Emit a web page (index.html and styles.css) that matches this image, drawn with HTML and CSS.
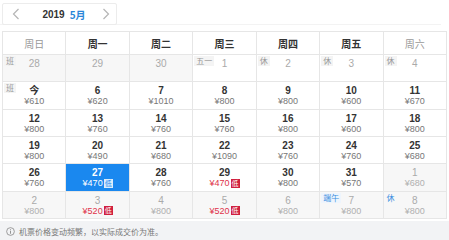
FILE: index.html
```html
<!DOCTYPE html>
<html lang="zh">
<head>
<meta charset="utf-8">
<link rel="stylesheet" href="styles.css">
</head>
<body>
<div class="cal">
  <div class="top">
    <div class="nav">
      <svg class="arr" width="8" height="12" viewBox="0 0 8 12"><path d="M6.5 1 L1.5 6 L6.5 11" fill="none" stroke="#b5b5b5" stroke-width="1.2"/></svg>
      <div class="ym"><span class="yr">2019</span><span class="mo">5月</span></div>
      <svg class="arr" width="8" height="12" viewBox="0 0 8 12"><path d="M1.5 1 L6.5 6 L1.5 11" fill="none" stroke="#b5b5b5" stroke-width="1.2"/></svg>
    </div>
  </div>
  <div class="grid">
    <div class="wh we">周日</div><div class="wh">周一</div><div class="wh">周二</div><div class="wh">周三</div><div class="wh">周四</div><div class="wh">周五</div><div class="wh we">周六</div>

    <div class="c out"><span class="tag">班</span><span class="n">28</span></div>
    <div class="c out"><span class="n">29</span></div>
    <div class="c out"><span class="n">30</span></div>
    <div class="c past"><span class="tag">五一</span><span class="n">1</span></div>
    <div class="c past"><span class="tag">休</span><span class="n">2</span></div>
    <div class="c past"><span class="tag">休</span><span class="n">3</span></div>
    <div class="c past"><span class="tag">休</span><span class="n">4</span></div>

    <div class="c"><span class="tag">班</span><span class="n">今</span><span class="p">¥610</span></div>
    <div class="c"><span class="n">6</span><span class="p">¥620</span></div>
    <div class="c"><span class="n">7</span><span class="p">¥1010</span></div>
    <div class="c"><span class="n">8</span><span class="p">¥800</span></div>
    <div class="c"><span class="n">9</span><span class="p">¥800</span></div>
    <div class="c"><span class="n">10</span><span class="p">¥600</span></div>
    <div class="c"><span class="n">11</span><span class="p">¥670</span></div>

    <div class="c"><span class="n">12</span><span class="p">¥800</span></div>
    <div class="c"><span class="n">13</span><span class="p">¥760</span></div>
    <div class="c"><span class="n">14</span><span class="p">¥760</span></div>
    <div class="c"><span class="n">15</span><span class="p">¥760</span></div>
    <div class="c"><span class="n">16</span><span class="p">¥800</span></div>
    <div class="c"><span class="n">17</span><span class="p">¥600</span></div>
    <div class="c"><span class="n">18</span><span class="p">¥800</span></div>

    <div class="c"><span class="n">19</span><span class="p">¥800</span></div>
    <div class="c"><span class="n">20</span><span class="p">¥490</span></div>
    <div class="c"><span class="n">21</span><span class="p">¥680</span></div>
    <div class="c"><span class="n">22</span><span class="p">¥1090</span></div>
    <div class="c"><span class="n">23</span><span class="p">¥760</span></div>
    <div class="c"><span class="n">24</span><span class="p">¥760</span></div>
    <div class="c"><span class="n">25</span><span class="p">¥680</span></div>

    <div class="c"><span class="n">26</span><span class="p">¥760</span></div>
    <div class="c sel"><span class="n">27</span><span class="p low">¥470<i class="lo">低</i></span></div>
    <div class="c"><span class="n">28</span><span class="p">¥760</span></div>
    <div class="c"><span class="n">29</span><span class="p low">¥470<i class="lo">低</i></span></div>
    <div class="c"><span class="n">30</span><span class="p">¥800</span></div>
    <div class="c"><span class="n">31</span><span class="p">¥570</span></div>
    <div class="c out"><span class="n">1</span><span class="p">¥680</span></div>

    <div class="c out"><span class="n">2</span><span class="p">¥800</span></div>
    <div class="c out"><span class="n">3</span><span class="p low">¥520<i class="lo">低</i></span></div>
    <div class="c out"><span class="n">4</span><span class="p">¥800</span></div>
    <div class="c out"><span class="n">5</span><span class="p low">¥520<i class="lo">低</i></span></div>
    <div class="c out"><span class="n">6</span><span class="p">¥800</span></div>
    <div class="c out"><span class="tag blue">端午</span><span class="n">7</span><span class="p">¥800</span></div>
    <div class="c out"><span class="tag blue plain">休</span><span class="n">8</span><span class="p">¥800</span></div>
  </div>
  <div class="tip">
    <svg width="9" height="9" viewBox="0 0 10 10"><circle cx="5" cy="5" r="4.3" fill="none" stroke="#8a8a8a" stroke-width="0.9"/><rect x="4.5" y="4.2" width="1" height="3.3" fill="#8a8a8a"/><rect x="4.5" y="2.5" width="1" height="1" fill="#8a8a8a"/></svg>
    <span>机票价格变动频繁，以实际成交价为准。</span>
  </div>
</div>
</body>
</html>
```

FILE: styles.css
```css
* { box-sizing: border-box; }
html, body { margin: 0; padding: 0; background: #fff; }
body {
  font-family: "Liberation Sans", Arial, "Noto Sans CJK SC", sans-serif;
  width: 449px;
  height: 240px;
  overflow: hidden;
}
.cal { display: flex; flex-direction: column; }
.top {
  height: 25px;
  padding: 3px 0 0 2px;
  border-bottom: 1px solid #f3f3f3;
  margin-right: 8px;
}
.nav {
  width: 115px;
  height: 22px;
  border: 1px solid #ececec;
  border-radius: 2px;
  display: flex;
  align-items: center;
  justify-content: space-between;
  padding: 0 6px 0 9px;
}
.ym { display: flex; align-items: center; gap: 5px; margin-left: 6px; }
.yr { font-size: 10px; font-weight: bold; color: #333; }
.mo { font-size: 10px; font-weight: bold; color: #2a86d8; font-family: "Noto Sans CJK SC", sans-serif; }
.grid {
  margin: 6px 2px 0 2px;
  width: 445px;
  display: grid;
  grid-template-columns: repeat(7, 1fr);
  grid-template-rows: 23px repeat(6, 27.35px);
  border-top: 1px solid #e6e6e6;
  border-left: 1px solid #e6e6e6;
}
.wh {
  border-right: 1px solid #e6e6e6;
  border-bottom: 1px solid #e6e6e6;
  display: flex; align-items: center; justify-content: center;
  font-family: "Noto Sans CJK SC", sans-serif;
  font-size: 10px;
  color: #333;
  font-weight: bold;
}
.wh.we { color: #999; font-weight: normal; }
.c {
  position: relative;
  border-right: 1px solid #e6e6e6;
  border-bottom: 1px solid #e6e6e6;
  display: flex; flex-direction: column; align-items: center;
  padding-top: 3px;
}
.n { font-size: 10px; line-height: 11px; font-weight: bold; color: #333; font-family: "Liberation Sans", "Noto Sans CJK SC", sans-serif; }
.p { font-size: 9px; line-height: 10px; color: #777; display: flex; align-items: center; }
.p.low { color: #e0324a; }
.lo {
  font-style: normal;
  font-family: "Noto Sans CJK SC", sans-serif;
  font-size: 7px; line-height: 9px;
  width: 9px; height: 9px;
  margin-left: 1px;
  background: #d0203f; color: #fff;
  text-align: center;
}
.past .n, .out .n { color: #aaa; font-weight: normal; }
.out { background: #f7f7f7; }
.out .p { color: #b0b0b0; }
.out .p.low { color: #e0324a; }
.sel { background: #1a88ef; }
.sel .n, .sel .p { color: #fff; }
.sel .lo { background: #dcecfb; color: #1a88ef; }
.tag {
  position: absolute;
  top: 1px; left: 1px;
  font-family: "Noto Sans CJK SC", sans-serif;
  font-size: 8px; line-height: 10px;
  padding: 0 2px;
  background: #f4f4f4;
  color: #999;
}
.tag.blue { color: #3d8fe0; background: #eef5fd; }
.tag.plain { background: transparent; }
.tip {
  margin-top: 2px;
  height: 21px;
  background: #f2f3f5;
  display: flex; align-items: center; gap: 4px;
  padding-left: 6px;
  font-family: "Noto Sans CJK SC", sans-serif;
  font-size: 8px;
  color: #777;
}
```
